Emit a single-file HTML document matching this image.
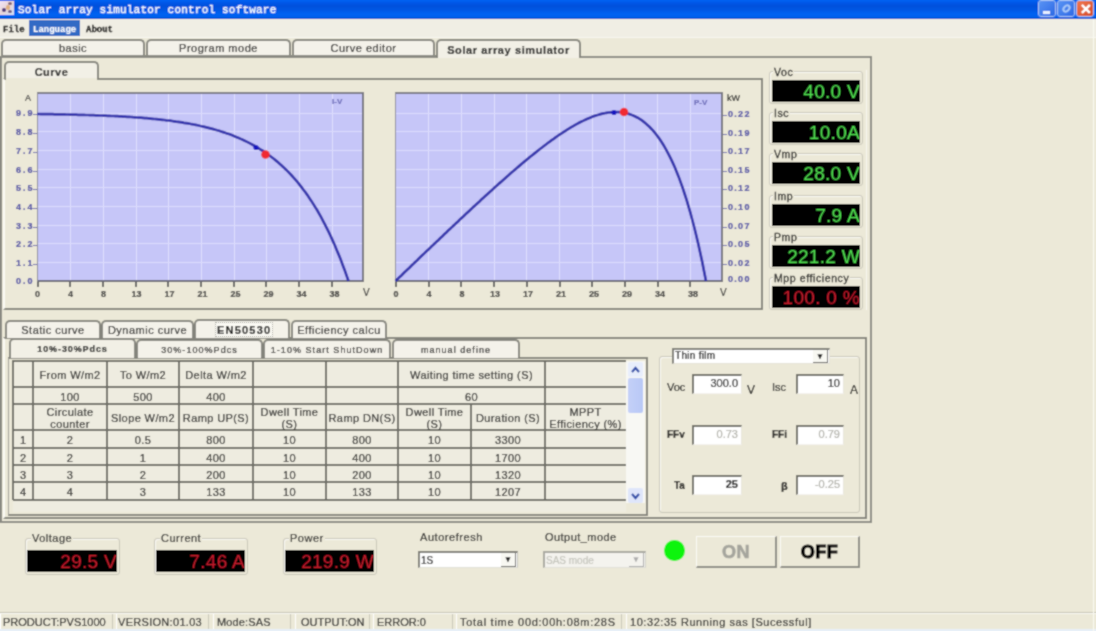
<!DOCTYPE html><html><head><meta charset="utf-8"><style>
*{box-sizing:border-box}
html,body{margin:0;padding:0}
html{background:#ece9d8}
body{width:1096px;height:631px;overflow:hidden;position:relative;background:#ece9d8;filter:url(#bl);-webkit-text-stroke:0.2px;font-family:"Liberation Sans",sans-serif;color:#222}
.a{position:absolute}
.t{position:absolute;white-space:nowrap;line-height:1}
.tab{-webkit-text-stroke:0.2px;position:absolute;border:2px solid #84847c;border-bottom:none;border-radius:5px 5px 0 0;background:#f1efe6;text-align:center;font-size:11px;color:#1c1c1c;white-space:nowrap}
.lcd{position:absolute;background:#000;text-align:right;-webkit-text-stroke:0;font-family:"Liberation Sans",sans-serif;white-space:nowrap;overflow:hidden}
.grp{position:absolute;border:1px solid #c8c6b8;border-radius:3px;box-shadow:inset 1px 1px 0 #fbfaf6}
.gl{position:absolute;background:#ece9d8;font-size:11px;color:#222;padding:0 1px;line-height:1}
.inp{position:absolute;background:#fff;border-top:2px solid #6c6c64;border-left:2px solid #6c6c64;border-right:1px solid #e8e6dc;border-bottom:1px solid #f4f3ee;font-size:11px;text-align:right;padding-right:3px;line-height:15px;color:#111}
</style></head><body>
<svg width="0" height="0" style="position:absolute"><filter id="bl" x="0" y="0" width="1" height="1"><feConvolveMatrix order="3" kernelMatrix="1 2 1 2 8 2 1 2 1" divisor="20" edgeMode="duplicate"/></filter></svg>

<div class="a" style="left:0;top:0;width:1096px;height:19px;background:linear-gradient(#0064f4 0px,#0056e6 3px,#0050dc 6px,#0056e4 10px,#0062f2 14px,#0060ee 17px,#0a4cc0 19px)"></div>
<div class="a" style="left:0px;top:1px;width:14px;height:14px;background:linear-gradient(135deg,#f0e4f4,#e8d4d8 50%,#cfe0f8)"></div>
<div class="a" style="left:6px;top:5px;width:4px;height:5px;background:#e0b080;border-radius:2px"></div>
<div class="a" style="left:2px;top:8px;width:4px;height:4px;background:#503878;border-radius:50%"></div>
<div class="a" style="left:8px;top:2px;width:4px;height:3px;background:#806070;border-radius:50%"></div>
<div class="a" style="left:8px;top:10px;width:4px;height:3px;background:#705880;border-radius:50%"></div>
<div class="t" style="left:18px;top:5px;font-family:'Liberation Mono',monospace;font-weight:normal;font-size:11px;color:#ffffff;letter-spacing:0.2px;-webkit-text-stroke:0.35px #fff">Solar array simulator control software</div>
<div class="a" style="left:1038px;top:0px;width:18px;height:17px;border:1px solid #a8c4f4;border-radius:3px;background:linear-gradient(135deg,#5a94f4,#2c68e4)"><div class="a" style="left:4px;top:10px;width:7px;height:3px;background:#e8f0ff"></div></div>
<div class="a" style="left:1057px;top:0px;width:18px;height:17px;border:1px solid #a8c4f4;border-radius:3px;background:linear-gradient(135deg,#5a94f4,#2c68e4)"><div class="a" style="left:4px;top:4px;width:9px;height:7px;border:2px solid #a8c8f8;border-radius:50%;transform:rotate(-45deg)"></div></div>
<div class="a" style="left:1076px;top:0px;width:18px;height:17px;border:1px solid #a8c4f4;border-radius:3px;background:linear-gradient(135deg,#f07850,#d44a24)"><div class="t" style="left:3px;top:1px;font-size:14px;font-weight:bold;color:#fff">&#x2715;</div></div>
<div class="a" style="left:0;top:19px;width:1096px;height:19px;background:#f0eee4;border-bottom:1px solid #f8f7f0"></div>
<div class="a" style="left:29px;top:20px;width:51px;height:16px;background:#316ac5"></div>
<div class="t" style="left:3px;top:26px;font-family:'Liberation Mono',monospace;font-weight:bold;font-size:9px;color:#000;-webkit-text-stroke:0.3px">File</div>
<div class="t" style="left:33px;top:26px;font-family:'Liberation Mono',monospace;font-weight:bold;font-size:9px;color:#fff;-webkit-text-stroke:0.2px">Language</div>
<div class="t" style="left:86px;top:26px;font-family:'Liberation Mono',monospace;font-weight:bold;font-size:9px;color:#000;-webkit-text-stroke:0.3px">About</div>
<div class="a" style="left:0px;top:56px;width:872px;height:467px;border:2px solid #8a8a82;border-top-width:2px"></div>
<div class="tab" style="left:1px;top:39px;width:144px;height:18px;background:#f4f2ea;"><div class="t" style="left:0;right:0;top:2px;font-size:11px;letter-spacing:0.5px;">basic</div></div>
<div class="tab" style="left:146px;top:39px;width:145px;height:18px;background:#f4f2ea;"><div class="t" style="left:0;right:0;top:2px;font-size:11px;letter-spacing:0.5px;">Program mode</div></div>
<div class="tab" style="left:292px;top:39px;width:143px;height:18px;background:#f4f2ea;"><div class="t" style="left:0;right:0;top:2px;font-size:11px;letter-spacing:0.5px;">Curve editor</div></div>
<div class="a" style="left:1px;top:55px;width:435px;height:2px;background:#8a8a82"></div>
<div class="tab" style="left:436px;top:39px;width:145px;height:19px;background:#f2f0e6;"><div class="t" style="left:0;right:0;top:4px;font-size:11px;letter-spacing:0.6px;font-weight:bold;">Solar array simulator</div></div>
<div class="a" style="left:3px;top:78px;width:760px;height:232px;border:2px solid #84847c;border-left:2px solid #fbfaf4"></div>
<div class="tab" style="left:4px;top:61px;width:95px;height:18px;background:#f2f0e6;"><div class="t" style="left:0;right:0;top:4px;font-size:11px;letter-spacing:0.5px;font-weight:bold;">Curve</div></div>
<div class="a" style="left:6px;top:78px;width:91px;height:2px;background:#ece9d8"></div>
<div class="a" style="left:37px;top:92px;width:327px;height:190px;background:#c6c6f8;border-top:2px solid #7a7a84;border-right:2px solid #74747e;border-bottom:2px solid #6a6a78;border-left:1px solid #8a8a98"></div>
<div class="a" style="left:70px;top:94px;width:1px;height:186px;background:#e0e0fe"></div>
<div class="a" style="left:103px;top:94px;width:1px;height:186px;background:#e0e0fe"></div>
<div class="a" style="left:136px;top:94px;width:1px;height:186px;background:#e0e0fe"></div>
<div class="a" style="left:168px;top:94px;width:1px;height:186px;background:#e0e0fe"></div>
<div class="a" style="left:201px;top:94px;width:1px;height:186px;background:#e0e0fe"></div>
<div class="a" style="left:234px;top:94px;width:1px;height:186px;background:#e0e0fe"></div>
<div class="a" style="left:266px;top:94px;width:1px;height:186px;background:#e0e0fe"></div>
<div class="a" style="left:299px;top:94px;width:1px;height:186px;background:#e0e0fe"></div>
<div class="a" style="left:332px;top:94px;width:1px;height:186px;background:#e0e0fe"></div>
<div class="a" style="left:38px;top:113px;width:324px;height:1px;background:#dcdcfd"></div>
<div class="a" style="left:38px;top:131px;width:324px;height:1px;background:#dcdcfd"></div>
<div class="a" style="left:38px;top:150px;width:324px;height:1px;background:#dcdcfd"></div>
<div class="a" style="left:38px;top:169px;width:324px;height:1px;background:#dcdcfd"></div>
<div class="a" style="left:38px;top:187px;width:324px;height:1px;background:#dcdcfd"></div>
<div class="a" style="left:38px;top:206px;width:324px;height:1px;background:#dcdcfd"></div>
<div class="a" style="left:38px;top:225px;width:324px;height:1px;background:#dcdcfd"></div>
<div class="a" style="left:38px;top:243px;width:324px;height:1px;background:#dcdcfd"></div>
<div class="a" style="left:38px;top:262px;width:324px;height:1px;background:#dcdcfd"></div>
<div class="a" style="left:395px;top:92px;width:328px;height:190px;background:#c6c6f8;border-top:2px solid #7a7a84;border-right:2px solid #74747e;border-bottom:2px solid #6a6a78;border-left:1px solid #8a8a98"></div>
<div class="a" style="left:428px;top:94px;width:1px;height:186px;background:#e0e0fe"></div>
<div class="a" style="left:461px;top:94px;width:1px;height:186px;background:#e0e0fe"></div>
<div class="a" style="left:494px;top:94px;width:1px;height:186px;background:#e0e0fe"></div>
<div class="a" style="left:526px;top:94px;width:1px;height:186px;background:#e0e0fe"></div>
<div class="a" style="left:559px;top:94px;width:1px;height:186px;background:#e0e0fe"></div>
<div class="a" style="left:592px;top:94px;width:1px;height:186px;background:#e0e0fe"></div>
<div class="a" style="left:624px;top:94px;width:1px;height:186px;background:#e0e0fe"></div>
<div class="a" style="left:657px;top:94px;width:1px;height:186px;background:#e0e0fe"></div>
<div class="a" style="left:690px;top:94px;width:1px;height:186px;background:#e0e0fe"></div>
<div class="a" style="left:396px;top:113px;width:325px;height:1px;background:#dcdcfd"></div>
<div class="a" style="left:396px;top:131px;width:325px;height:1px;background:#dcdcfd"></div>
<div class="a" style="left:396px;top:150px;width:325px;height:1px;background:#dcdcfd"></div>
<div class="a" style="left:396px;top:169px;width:325px;height:1px;background:#dcdcfd"></div>
<div class="a" style="left:396px;top:187px;width:325px;height:1px;background:#dcdcfd"></div>
<div class="a" style="left:396px;top:206px;width:325px;height:1px;background:#dcdcfd"></div>
<div class="a" style="left:396px;top:225px;width:325px;height:1px;background:#dcdcfd"></div>
<div class="a" style="left:396px;top:243px;width:325px;height:1px;background:#dcdcfd"></div>
<div class="a" style="left:396px;top:262px;width:325px;height:1px;background:#dcdcfd"></div>
<div class="a" style="left:36.5px;top:282px;width:2px;height:5px;background:#606060"></div>
<div class="t" style="left:27.5px;width:20px;text-align:center;top:290px;font-size:9px;color:#3a3a3a;font-weight:bold">0</div>
<div class="a" style="left:395.0px;top:282px;width:2px;height:5px;background:#606060"></div>
<div class="t" style="left:386.0px;width:20px;text-align:center;top:290px;font-size:9px;color:#3a3a3a;font-weight:bold">0</div>
<div class="a" style="left:69.2px;top:282px;width:2px;height:5px;background:#606060"></div>
<div class="t" style="left:60.5px;width:20px;text-align:center;top:290px;font-size:9px;color:#3a3a3a;font-weight:bold">4</div>
<div class="a" style="left:427.7px;top:282px;width:2px;height:5px;background:#606060"></div>
<div class="t" style="left:419.0px;width:20px;text-align:center;top:290px;font-size:9px;color:#3a3a3a;font-weight:bold">4</div>
<div class="a" style="left:101.9px;top:282px;width:2px;height:5px;background:#606060"></div>
<div class="t" style="left:93.5px;width:20px;text-align:center;top:290px;font-size:9px;color:#3a3a3a;font-weight:bold">8</div>
<div class="a" style="left:460.4px;top:282px;width:2px;height:5px;background:#606060"></div>
<div class="t" style="left:452.0px;width:20px;text-align:center;top:290px;font-size:9px;color:#3a3a3a;font-weight:bold">8</div>
<div class="a" style="left:134.6px;top:282px;width:2px;height:5px;background:#606060"></div>
<div class="t" style="left:126.5px;width:20px;text-align:center;top:290px;font-size:9px;color:#3a3a3a;font-weight:bold">13</div>
<div class="a" style="left:493.1px;top:282px;width:2px;height:5px;background:#606060"></div>
<div class="t" style="left:485.0px;width:20px;text-align:center;top:290px;font-size:9px;color:#3a3a3a;font-weight:bold">13</div>
<div class="a" style="left:167.3px;top:282px;width:2px;height:5px;background:#606060"></div>
<div class="t" style="left:159.5px;width:20px;text-align:center;top:290px;font-size:9px;color:#3a3a3a;font-weight:bold">17</div>
<div class="a" style="left:525.8px;top:282px;width:2px;height:5px;background:#606060"></div>
<div class="t" style="left:518.0px;width:20px;text-align:center;top:290px;font-size:9px;color:#3a3a3a;font-weight:bold">17</div>
<div class="a" style="left:200.0px;top:282px;width:2px;height:5px;background:#606060"></div>
<div class="t" style="left:192.5px;width:20px;text-align:center;top:290px;font-size:9px;color:#3a3a3a;font-weight:bold">21</div>
<div class="a" style="left:558.5px;top:282px;width:2px;height:5px;background:#606060"></div>
<div class="t" style="left:551.0px;width:20px;text-align:center;top:290px;font-size:9px;color:#3a3a3a;font-weight:bold">21</div>
<div class="a" style="left:232.7px;top:282px;width:2px;height:5px;background:#606060"></div>
<div class="t" style="left:225.5px;width:20px;text-align:center;top:290px;font-size:9px;color:#3a3a3a;font-weight:bold">25</div>
<div class="a" style="left:591.2px;top:282px;width:2px;height:5px;background:#606060"></div>
<div class="t" style="left:584.0px;width:20px;text-align:center;top:290px;font-size:9px;color:#3a3a3a;font-weight:bold">25</div>
<div class="a" style="left:265.4px;top:282px;width:2px;height:5px;background:#606060"></div>
<div class="t" style="left:258.5px;width:20px;text-align:center;top:290px;font-size:9px;color:#3a3a3a;font-weight:bold">29</div>
<div class="a" style="left:623.9px;top:282px;width:2px;height:5px;background:#606060"></div>
<div class="t" style="left:617.0px;width:20px;text-align:center;top:290px;font-size:9px;color:#3a3a3a;font-weight:bold">29</div>
<div class="a" style="left:298.1px;top:282px;width:2px;height:5px;background:#606060"></div>
<div class="t" style="left:291.5px;width:20px;text-align:center;top:290px;font-size:9px;color:#3a3a3a;font-weight:bold">34</div>
<div class="a" style="left:656.6px;top:282px;width:2px;height:5px;background:#606060"></div>
<div class="t" style="left:650.0px;width:20px;text-align:center;top:290px;font-size:9px;color:#3a3a3a;font-weight:bold">34</div>
<div class="a" style="left:330.8px;top:282px;width:2px;height:5px;background:#606060"></div>
<div class="t" style="left:324.5px;width:20px;text-align:center;top:290px;font-size:9px;color:#3a3a3a;font-weight:bold">38</div>
<div class="a" style="left:689.3px;top:282px;width:2px;height:5px;background:#606060"></div>
<div class="t" style="left:683.0px;width:20px;text-align:center;top:290px;font-size:9px;color:#3a3a3a;font-weight:bold">38</div>
<div class="t" style="left:363px;top:288px;font-size:10px;color:#333">V</div>
<div class="t" style="left:720px;top:288px;font-size:10px;color:#333">V</div>
<div class="t" style="left:25px;top:94px;font-size:9px;color:#333">A</div>
<div class="t" style="left:727px;top:94px;font-size:9px;color:#222">kW</div>
<div class="t" style="left:16px;top:109.4px;font-size:9px;color:#4a4aa4;font-weight:bold;letter-spacing:2px">9.9</div>
<div class="a" style="left:33px;top:114.4px;width:4px;height:1px;background:#6060b0"></div>
<div class="t" style="left:16px;top:128.1px;font-size:9px;color:#4a4aa4;font-weight:bold;letter-spacing:2px">8.8</div>
<div class="a" style="left:33px;top:133.1px;width:4px;height:1px;background:#6060b0"></div>
<div class="t" style="left:16px;top:146.8px;font-size:9px;color:#4a4aa4;font-weight:bold;letter-spacing:2px">7.7</div>
<div class="a" style="left:33px;top:151.8px;width:4px;height:1px;background:#6060b0"></div>
<div class="t" style="left:16px;top:165.5px;font-size:9px;color:#4a4aa4;font-weight:bold;letter-spacing:2px">6.6</div>
<div class="a" style="left:33px;top:170.5px;width:4px;height:1px;background:#6060b0"></div>
<div class="t" style="left:16px;top:184.2px;font-size:9px;color:#4a4aa4;font-weight:bold;letter-spacing:2px">5.5</div>
<div class="a" style="left:33px;top:189.2px;width:4px;height:1px;background:#6060b0"></div>
<div class="t" style="left:16px;top:202.9px;font-size:9px;color:#4a4aa4;font-weight:bold;letter-spacing:2px">4.4</div>
<div class="a" style="left:33px;top:207.9px;width:4px;height:1px;background:#6060b0"></div>
<div class="t" style="left:16px;top:221.6px;font-size:9px;color:#4a4aa4;font-weight:bold;letter-spacing:2px">3.3</div>
<div class="a" style="left:33px;top:226.6px;width:4px;height:1px;background:#6060b0"></div>
<div class="t" style="left:16px;top:240.3px;font-size:9px;color:#4a4aa4;font-weight:bold;letter-spacing:2px">2.2</div>
<div class="a" style="left:33px;top:245.3px;width:4px;height:1px;background:#6060b0"></div>
<div class="t" style="left:16px;top:259.0px;font-size:9px;color:#4a4aa4;font-weight:bold;letter-spacing:2px">1.1</div>
<div class="a" style="left:33px;top:264.0px;width:4px;height:1px;background:#6060b0"></div>
<div class="t" style="left:16px;top:277px;font-size:9px;color:#4a4aa4;font-weight:bold;letter-spacing:2px">0.0</div>
<div class="t" style="left:728px;top:110.0px;font-size:9px;color:#4a4aa4;font-weight:bold;letter-spacing:1.3px">0.22</div>
<div class="a" style="left:723px;top:115.0px;width:4px;height:1px;background:#6060b0"></div>
<div class="t" style="left:728px;top:128.6px;font-size:9px;color:#4a4aa4;font-weight:bold;letter-spacing:1.3px">0.19</div>
<div class="a" style="left:723px;top:133.6px;width:4px;height:1px;background:#6060b0"></div>
<div class="t" style="left:728px;top:147.2px;font-size:9px;color:#4a4aa4;font-weight:bold;letter-spacing:1.3px">0.17</div>
<div class="a" style="left:723px;top:152.2px;width:4px;height:1px;background:#6060b0"></div>
<div class="t" style="left:728px;top:165.8px;font-size:9px;color:#4a4aa4;font-weight:bold;letter-spacing:1.3px">0.15</div>
<div class="a" style="left:723px;top:170.8px;width:4px;height:1px;background:#6060b0"></div>
<div class="t" style="left:728px;top:184.4px;font-size:9px;color:#4a4aa4;font-weight:bold;letter-spacing:1.3px">0.12</div>
<div class="a" style="left:723px;top:189.4px;width:4px;height:1px;background:#6060b0"></div>
<div class="t" style="left:728px;top:203.0px;font-size:9px;color:#4a4aa4;font-weight:bold;letter-spacing:1.3px">0.10</div>
<div class="a" style="left:723px;top:208.0px;width:4px;height:1px;background:#6060b0"></div>
<div class="t" style="left:728px;top:221.6px;font-size:9px;color:#4a4aa4;font-weight:bold;letter-spacing:1.3px">0.07</div>
<div class="a" style="left:723px;top:226.6px;width:4px;height:1px;background:#6060b0"></div>
<div class="t" style="left:728px;top:240.2px;font-size:9px;color:#4a4aa4;font-weight:bold;letter-spacing:1.3px">0.05</div>
<div class="a" style="left:723px;top:245.2px;width:4px;height:1px;background:#6060b0"></div>
<div class="t" style="left:728px;top:258.8px;font-size:9px;color:#4a4aa4;font-weight:bold;letter-spacing:1.3px">0.02</div>
<div class="a" style="left:723px;top:263.8px;width:4px;height:1px;background:#6060b0"></div>
<div class="t" style="left:728px;top:275px;font-size:9px;color:#4a4aa4;font-weight:bold;letter-spacing:1.3px">0.00</div>
<div class="t" style="left:332px;top:98px;font-size:8px;color:#6a6ab8;font-weight:bold">I-V</div>
<div class="t" style="left:694px;top:99px;font-size:8px;color:#6a6ab8;font-weight:bold">P-V</div>
<svg class="a" style="left:0;top:0" width="1096" height="631">
<polyline points="37.0,114.0 39.0,114.0 40.9,114.1 42.9,114.1 44.8,114.1 46.8,114.1 48.8,114.2 50.7,114.2 52.7,114.2 54.6,114.3 56.6,114.3 58.6,114.3 60.5,114.4 62.5,114.4 64.4,114.4 66.4,114.5 68.3,114.5 70.3,114.6 72.3,114.6 74.2,114.7 76.2,114.7 78.1,114.8 80.1,114.8 82.1,114.9 84.0,114.9 86.0,115.0 87.9,115.0 89.9,115.1 91.9,115.2 93.8,115.2 95.8,115.3 97.7,115.4 99.7,115.5 101.7,115.5 103.6,115.6 105.6,115.7 107.5,115.8 109.5,115.9 111.4,116.0 113.4,116.0 115.4,116.1 117.3,116.2 119.3,116.3 121.2,116.4 123.2,116.6 125.2,116.7 127.1,116.8 129.1,116.9 131.0,117.0 133.0,117.2 135.0,117.3 136.9,117.5 138.9,117.6 140.8,117.7 142.8,117.9 144.8,118.1 146.7,118.2 148.7,118.4 150.6,118.6 152.6,118.8 154.5,119.0 156.5,119.2 158.5,119.4 160.4,119.6 162.4,119.8 164.3,120.0 166.3,120.3 168.3,120.5 170.2,120.7 172.2,121.0 174.1,121.3 176.1,121.6 178.1,121.8 180.0,122.1 182.0,122.4 183.9,122.8 185.9,123.1 187.9,123.4 189.8,123.8 191.8,124.2 193.7,124.5 195.7,124.9 197.6,125.3 199.6,125.8 201.6,126.2 203.5,126.6 205.5,127.1 207.4,127.6 209.4,128.1 211.4,128.6 213.3,129.1 215.3,129.7 217.2,130.3 219.2,130.8 221.2,131.5 223.1,132.1 225.1,132.7 227.0,133.4 229.0,134.1 231.0,134.8 232.9,135.6 234.9,136.4 236.8,137.2 238.8,138.0 240.7,138.9 242.7,139.8 244.7,140.7 246.6,141.6 248.6,142.6 250.5,143.6 252.5,144.7 254.5,145.8 256.4,146.9 258.4,148.1 260.3,149.3 262.3,150.5 264.3,151.8 266.2,153.2 268.2,154.6 270.1,156.0 272.1,157.5 274.1,159.0 276.0,160.6 278.0,162.3 279.9,164.0 281.9,165.7 283.8,167.6 285.8,169.4 287.8,171.4 289.7,173.4 291.7,175.5 293.6,177.7 295.6,179.9 297.6,182.2 299.5,184.6 301.5,187.1 303.4,189.7 305.4,192.3 307.4,195.1 309.3,197.9 311.3,200.9 313.2,203.9 315.2,207.1 317.2,210.3 319.1,213.7 321.1,217.2 323.0,220.8 325.0,224.6 326.9,228.4 328.9,232.4 330.9,236.6 332.8,240.9 334.8,245.3 336.7,249.9 338.7,254.6 340.7,259.6 342.6,264.7 344.6,269.9 346.5,275.4 348.5,281.0" fill="none" stroke="#3030ac" stroke-width="2.7"/>
<polyline points="395.5,281.0 397.5,279.1 399.4,277.2 401.4,275.4 403.3,273.5 405.3,271.6 407.2,269.7 409.2,267.9 411.1,266.0 413.1,264.1 415.0,262.2 417.0,260.4 418.9,258.5 420.9,256.6 422.8,254.8 424.8,252.9 426.7,251.0 428.7,249.2 430.7,247.3 432.6,245.4 434.6,243.6 436.5,241.7 438.5,239.9 440.4,238.0 442.4,236.2 444.3,234.3 446.3,232.5 448.2,230.6 450.2,228.8 452.1,226.9 454.1,225.1 456.0,223.2 458.0,221.4 459.9,219.6 461.9,217.7 463.8,215.9 465.8,214.1 467.8,212.2 469.7,210.4 471.7,208.6 473.6,206.8 475.6,205.0 477.5,203.2 479.5,201.4 481.4,199.6 483.4,197.8 485.3,196.0 487.3,194.2 489.2,192.4 491.2,190.7 493.1,188.9 495.1,187.1 497.0,185.4 499.0,183.6 501.0,181.9 502.9,180.2 504.9,178.4 506.8,176.7 508.8,175.0 510.7,173.3 512.7,171.6 514.6,169.9 516.6,168.2 518.5,166.6 520.5,164.9 522.4,163.3 524.4,161.6 526.3,160.0 528.3,158.4 530.2,156.8 532.2,155.2 534.2,153.6 536.1,152.1 538.1,150.5 540.0,149.0 542.0,147.5 543.9,146.0 545.9,144.5 547.8,143.0 549.8,141.6 551.7,140.2 553.7,138.8 555.6,137.4 557.6,136.0 559.5,134.7 561.5,133.4 563.4,132.1 565.4,130.8 567.3,129.6 569.3,128.4 571.3,127.2 573.2,126.1 575.2,124.9 577.1,123.9 579.1,122.8 581.0,121.8 583.0,120.9 584.9,119.9 586.9,119.0 588.8,118.2 590.8,117.4 592.7,116.6 594.7,115.9 596.6,115.3 598.6,114.7 600.5,114.1 602.5,113.6 604.5,113.2 606.4,112.8 608.4,112.5 610.3,112.3 612.3,112.1 614.2,112.0 616.2,112.0 618.1,112.1 620.1,112.2 622.0,112.4 624.0,112.7 625.9,113.1 627.9,113.6 629.8,114.2 631.8,114.9 633.7,115.8 635.7,116.7 637.7,117.7 639.6,118.9 641.6,120.2 643.5,121.6 645.5,123.2 647.4,124.9 649.4,126.7 651.3,128.7 653.3,130.9 655.2,133.2 657.2,135.7 659.1,138.4 661.1,141.3 663.0,144.3 665.0,147.6 666.9,151.1 668.9,154.8 670.8,158.7 672.8,162.9 674.8,167.3 676.7,172.0 678.7,176.9 680.6,182.1 682.6,187.7 684.5,193.5 686.5,199.6 688.4,206.0 690.4,212.8 692.3,220.0 694.3,227.5 696.2,235.3 698.2,243.6 700.1,252.3 702.1,261.4 704.0,271.0 706.0,281.0" fill="none" stroke="#3030ac" stroke-width="2.7"/>
<circle cx="265.5" cy="154.5" r="4.3" fill="#f02a30"/>
<circle cx="624" cy="112" r="4.3" fill="#f02a30"/>
<circle cx="256" cy="147.5" r="2.6" fill="#1414c0"/>
<circle cx="614" cy="112.5" r="2.6" fill="#1414c0"/>
</svg>
<div class="grp" style="left:769px;top:71px;width:94px;height:33px"></div>
<div class="gl" style="left:773px;top:67px;font-size:10.5px;letter-spacing:0.6px;color:#1a1a1a;-webkit-text-stroke:0.3px">Voc</div>
<div class="lcd" style="left:772px;top:80px;width:88px;height:22px;color:#50e050;font-size:19px;font-weight:normal;line-height:23px;letter-spacing:0.3px">40.0 V</div>
<div class="grp" style="left:769px;top:112px;width:94px;height:33px"></div>
<div class="gl" style="left:773px;top:108px;font-size:10.5px;letter-spacing:0.6px;color:#1a1a1a;-webkit-text-stroke:0.3px">Isc</div>
<div class="lcd" style="left:772px;top:121px;width:88px;height:22px;color:#50e050;font-size:19px;font-weight:normal;line-height:23px;letter-spacing:0.3px">10.0A</div>
<div class="grp" style="left:769px;top:153px;width:94px;height:33px"></div>
<div class="gl" style="left:773px;top:149px;font-size:10.5px;letter-spacing:0.6px;color:#1a1a1a;-webkit-text-stroke:0.3px">Vmp</div>
<div class="lcd" style="left:772px;top:162px;width:88px;height:22px;color:#50e050;font-size:19px;font-weight:normal;line-height:23px;letter-spacing:0.3px">28.0 V</div>
<div class="grp" style="left:769px;top:195px;width:94px;height:33px"></div>
<div class="gl" style="left:773px;top:191px;font-size:10.5px;letter-spacing:0.6px;color:#1a1a1a;-webkit-text-stroke:0.3px">Imp</div>
<div class="lcd" style="left:772px;top:204px;width:88px;height:22px;color:#50e050;font-size:19px;font-weight:normal;line-height:23px;letter-spacing:0.3px">7.9 A</div>
<div class="grp" style="left:769px;top:236px;width:94px;height:33px"></div>
<div class="gl" style="left:773px;top:232px;font-size:10.5px;letter-spacing:0.6px;color:#1a1a1a;-webkit-text-stroke:0.3px">Pmp</div>
<div class="lcd" style="left:772px;top:245px;width:88px;height:22px;color:#50e050;font-size:19px;font-weight:normal;line-height:23px;letter-spacing:0.3px">221.2 W</div>
<div class="grp" style="left:769px;top:277px;width:94px;height:33px"></div>
<div class="gl" style="left:773px;top:273px;font-size:10.5px;letter-spacing:0.6px;color:#1a1a1a;-webkit-text-stroke:0.3px">Mpp efficiency</div>
<div class="lcd" style="left:772px;top:286px;width:88px;height:22px;color:#c41a2a;font-size:19px;font-weight:normal;line-height:23px;letter-spacing:0.3px">100. 0 %</div>
<div class="a" style="left:866px;top:70px;width:1px;height:240px;background:#f8f7f0"></div>
<div class="a" style="left:3px;top:337px;width:864px;height:182px;border:2px solid #84847c;border-left:2px solid #fbfaf4"></div>
<div class="tab" style="left:5px;top:320px;width:96px;height:18px;background:#f4f2ea;"><div class="t" style="left:0;right:0;top:3px;font-size:11px;letter-spacing:0.5px;">Static curve</div></div>
<div class="tab" style="left:101px;top:320px;width:93px;height:18px;background:#f4f2ea;"><div class="t" style="left:0;right:0;top:3px;font-size:11px;letter-spacing:0.5px;">Dynamic curve</div></div>
<div class="tab" style="left:291px;top:320px;width:96px;height:18px;background:#f4f2ea;"><div class="t" style="left:0;right:0;top:3px;font-size:11px;letter-spacing:0.5px;">Efficiency calcu</div></div>
<div class="tab" style="left:194px;top:319px;width:96px;height:19px;background:#f4f2ea;"><div class="t" style="left:0;right:0;top:4px;font-size:11px;letter-spacing:0.5px;"></div></div>
<div class="a" style="left:215px;top:322px;width:58px;height:15px;background:#fbfaf4;border:1px dotted #9a9a90"></div>
<div class="t" style="left:217px;top:325px;font-size:11px;font-weight:bold;color:#111;letter-spacing:1.2px">EN50530</div>
<div class="a" style="left:8px;top:357px;width:640px;height:159px;border:2px solid #84847c;border-left:1px solid #9c9c94"></div>
<div class="tab" style="left:136px;top:339px;width:127px;height:19px;background:#f4f2ea;"><div class="t" style="left:0;right:0;top:5px;font-size:9px;letter-spacing:1.05px;">30%-100%Pdcs</div></div>
<div class="tab" style="left:263px;top:339px;width:128px;height:19px;background:#f4f2ea;"><div class="t" style="left:0;right:0;top:5px;font-size:9px;letter-spacing:1.05px;">1-10% Start ShutDown</div></div>
<div class="tab" style="left:392px;top:339px;width:128px;height:19px;background:#f4f2ea;"><div class="t" style="left:0;right:0;top:5px;font-size:9px;letter-spacing:1.05px;">manual define</div></div>
<div class="tab" style="left:9px;top:338px;width:127px;height:20px;background:#f2f0e6;"><div class="t" style="left:0;right:0;top:5px;font-size:9px;letter-spacing:0.9px;font-weight:bold;">10%-30%Pdcs</div></div>
<div class="a" style="left:13px;top:361px;width:613px;height:151px;background:#eeece0"></div>
<div class="a" style="left:13px;top:386px;width:613px;height:2px;background:#6c6c64"></div>
<div class="a" style="left:13px;top:403px;width:613px;height:2px;background:#6c6c64"></div>
<div class="a" style="left:13px;top:429px;width:613px;height:2px;background:#6c6c64"></div>
<div class="a" style="left:13px;top:447px;width:613px;height:2px;background:#6c6c64"></div>
<div class="a" style="left:13px;top:464px;width:613px;height:2px;background:#6c6c64"></div>
<div class="a" style="left:13px;top:481px;width:613px;height:2px;background:#6c6c64"></div>
<div class="a" style="left:13px;top:499px;width:613px;height:2px;background:#6c6c64"></div>
<div class="a" style="left:12px;top:360px;width:614px;height:2px;background:#6c6c64"></div>
<div class="a" style="left:12px;top:361px;width:2px;height:139px;background:#6c6c64"></div>
<div class="a" style="left:32px;top:361px;width:2px;height:139px;background:#6c6c64"></div>
<div class="a" style="left:106px;top:361px;width:2px;height:139px;background:#6c6c64"></div>
<div class="a" style="left:178px;top:361px;width:2px;height:139px;background:#6c6c64"></div>
<div class="a" style="left:252px;top:361px;width:2px;height:139px;background:#6c6c64"></div>
<div class="a" style="left:325px;top:361px;width:2px;height:139px;background:#6c6c64"></div>
<div class="a" style="left:397px;top:361px;width:2px;height:139px;background:#6c6c64"></div>
<div class="a" style="left:470px;top:404px;width:2px;height:96px;background:#6c6c64"></div>
<div class="a" style="left:544px;top:361px;width:2px;height:139px;background:#6c6c64"></div>
<div class="a" style="left:33px;top:362px;width:74px;height:26px;display:flex;align-items:center;justify-content:center;text-align:center;font-size:11px;line-height:12px;letter-spacing:0.4px;color:#1c1c1c">From W/m2</div>
<div class="a" style="left:107px;top:362px;width:72px;height:26px;display:flex;align-items:center;justify-content:center;text-align:center;font-size:11px;line-height:12px;letter-spacing:0.4px;color:#1c1c1c">To W/m2</div>
<div class="a" style="left:179px;top:362px;width:74px;height:26px;display:flex;align-items:center;justify-content:center;text-align:center;font-size:11px;line-height:12px;letter-spacing:0.4px;color:#1c1c1c">Delta W/m2</div>
<div class="a" style="left:398px;top:362px;width:147px;height:26px;display:flex;align-items:center;justify-content:center;text-align:center;font-size:11px;line-height:12px;letter-spacing:0.4px;color:#1c1c1c">Waiting time setting (S)</div>
<div class="a" style="left:33px;top:388px;width:74px;height:17px;display:flex;align-items:center;justify-content:center;text-align:center;font-size:11px;line-height:12px;letter-spacing:0.4px;color:#1c1c1c">100</div>
<div class="a" style="left:107px;top:388px;width:72px;height:17px;display:flex;align-items:center;justify-content:center;text-align:center;font-size:11px;line-height:12px;letter-spacing:0.4px;color:#1c1c1c">500</div>
<div class="a" style="left:179px;top:388px;width:74px;height:17px;display:flex;align-items:center;justify-content:center;text-align:center;font-size:11px;line-height:12px;letter-spacing:0.4px;color:#1c1c1c">400</div>
<div class="a" style="left:398px;top:388px;width:147px;height:17px;display:flex;align-items:center;justify-content:center;text-align:center;font-size:11px;line-height:12px;letter-spacing:0.4px;color:#1c1c1c">60</div>
<div class="a" style="left:33px;top:405px;width:74px;height:26px;display:flex;align-items:center;justify-content:center;text-align:center;font-size:11px;line-height:12px;letter-spacing:0.4px;color:#1c1c1c">Circulate<br>counter</div>
<div class="a" style="left:107px;top:405px;width:72px;height:26px;display:flex;align-items:center;justify-content:center;text-align:center;font-size:11px;line-height:12px;letter-spacing:0.4px;color:#1c1c1c">Slope W/m2</div>
<div class="a" style="left:179px;top:405px;width:74px;height:26px;display:flex;align-items:center;justify-content:center;text-align:center;font-size:11px;line-height:12px;letter-spacing:0.4px;color:#1c1c1c">Ramp UP(S)</div>
<div class="a" style="left:253px;top:405px;width:73px;height:26px;display:flex;align-items:center;justify-content:center;text-align:center;font-size:11px;line-height:12px;letter-spacing:0.4px;color:#1c1c1c">Dwell Time<br>(S)</div>
<div class="a" style="left:326px;top:405px;width:72px;height:26px;display:flex;align-items:center;justify-content:center;text-align:center;font-size:11px;line-height:12px;letter-spacing:0.4px;color:#1c1c1c">Ramp DN(S)</div>
<div class="a" style="left:398px;top:405px;width:73px;height:26px;display:flex;align-items:center;justify-content:center;text-align:center;font-size:11px;line-height:12px;letter-spacing:0.4px;color:#1c1c1c">Dwell Time<br>(S)</div>
<div class="a" style="left:471px;top:405px;width:74px;height:26px;display:flex;align-items:center;justify-content:center;text-align:center;font-size:11px;line-height:12px;letter-spacing:0.4px;color:#1c1c1c">Duration (S)</div>
<div class="a" style="left:545px;top:405px;width:81px;height:26px;display:flex;align-items:center;justify-content:center;text-align:center;font-size:11px;line-height:12px;letter-spacing:0.4px;color:#1c1c1c">MPPT<br>Efficiency (%)</div>
<div class="t" style="left:20px;top:435px;font-size:11px;color:#1c1c1c">1</div>
<div class="a" style="left:33px;top:431px;width:74px;height:18px;display:flex;align-items:center;justify-content:center;text-align:center;font-size:11px;line-height:12px;letter-spacing:0.4px;color:#1c1c1c">2</div>
<div class="a" style="left:107px;top:431px;width:72px;height:18px;display:flex;align-items:center;justify-content:center;text-align:center;font-size:11px;line-height:12px;letter-spacing:0.4px;color:#1c1c1c">0.5</div>
<div class="a" style="left:179px;top:431px;width:74px;height:18px;display:flex;align-items:center;justify-content:center;text-align:center;font-size:11px;line-height:12px;letter-spacing:0.4px;color:#1c1c1c">800</div>
<div class="a" style="left:253px;top:431px;width:73px;height:18px;display:flex;align-items:center;justify-content:center;text-align:center;font-size:11px;line-height:12px;letter-spacing:0.4px;color:#1c1c1c">10</div>
<div class="a" style="left:326px;top:431px;width:72px;height:18px;display:flex;align-items:center;justify-content:center;text-align:center;font-size:11px;line-height:12px;letter-spacing:0.4px;color:#1c1c1c">800</div>
<div class="a" style="left:398px;top:431px;width:73px;height:18px;display:flex;align-items:center;justify-content:center;text-align:center;font-size:11px;line-height:12px;letter-spacing:0.4px;color:#1c1c1c">10</div>
<div class="a" style="left:471px;top:431px;width:74px;height:18px;display:flex;align-items:center;justify-content:center;text-align:center;font-size:11px;line-height:12px;letter-spacing:0.4px;color:#1c1c1c">3300</div>
<div class="a" style="left:545px;top:431px;width:81px;height:18px;display:flex;align-items:center;justify-content:center;text-align:center;font-size:11px;line-height:12px;letter-spacing:0.4px;color:#1c1c1c"></div>
<div class="t" style="left:20px;top:453px;font-size:11px;color:#1c1c1c">2</div>
<div class="a" style="left:33px;top:449px;width:74px;height:17px;display:flex;align-items:center;justify-content:center;text-align:center;font-size:11px;line-height:12px;letter-spacing:0.4px;color:#1c1c1c">2</div>
<div class="a" style="left:107px;top:449px;width:72px;height:17px;display:flex;align-items:center;justify-content:center;text-align:center;font-size:11px;line-height:12px;letter-spacing:0.4px;color:#1c1c1c">1</div>
<div class="a" style="left:179px;top:449px;width:74px;height:17px;display:flex;align-items:center;justify-content:center;text-align:center;font-size:11px;line-height:12px;letter-spacing:0.4px;color:#1c1c1c">400</div>
<div class="a" style="left:253px;top:449px;width:73px;height:17px;display:flex;align-items:center;justify-content:center;text-align:center;font-size:11px;line-height:12px;letter-spacing:0.4px;color:#1c1c1c">10</div>
<div class="a" style="left:326px;top:449px;width:72px;height:17px;display:flex;align-items:center;justify-content:center;text-align:center;font-size:11px;line-height:12px;letter-spacing:0.4px;color:#1c1c1c">400</div>
<div class="a" style="left:398px;top:449px;width:73px;height:17px;display:flex;align-items:center;justify-content:center;text-align:center;font-size:11px;line-height:12px;letter-spacing:0.4px;color:#1c1c1c">10</div>
<div class="a" style="left:471px;top:449px;width:74px;height:17px;display:flex;align-items:center;justify-content:center;text-align:center;font-size:11px;line-height:12px;letter-spacing:0.4px;color:#1c1c1c">1700</div>
<div class="a" style="left:545px;top:449px;width:81px;height:17px;display:flex;align-items:center;justify-content:center;text-align:center;font-size:11px;line-height:12px;letter-spacing:0.4px;color:#1c1c1c"></div>
<div class="t" style="left:20px;top:470px;font-size:11px;color:#1c1c1c">3</div>
<div class="a" style="left:33px;top:466px;width:74px;height:17px;display:flex;align-items:center;justify-content:center;text-align:center;font-size:11px;line-height:12px;letter-spacing:0.4px;color:#1c1c1c">3</div>
<div class="a" style="left:107px;top:466px;width:72px;height:17px;display:flex;align-items:center;justify-content:center;text-align:center;font-size:11px;line-height:12px;letter-spacing:0.4px;color:#1c1c1c">2</div>
<div class="a" style="left:179px;top:466px;width:74px;height:17px;display:flex;align-items:center;justify-content:center;text-align:center;font-size:11px;line-height:12px;letter-spacing:0.4px;color:#1c1c1c">200</div>
<div class="a" style="left:253px;top:466px;width:73px;height:17px;display:flex;align-items:center;justify-content:center;text-align:center;font-size:11px;line-height:12px;letter-spacing:0.4px;color:#1c1c1c">10</div>
<div class="a" style="left:326px;top:466px;width:72px;height:17px;display:flex;align-items:center;justify-content:center;text-align:center;font-size:11px;line-height:12px;letter-spacing:0.4px;color:#1c1c1c">200</div>
<div class="a" style="left:398px;top:466px;width:73px;height:17px;display:flex;align-items:center;justify-content:center;text-align:center;font-size:11px;line-height:12px;letter-spacing:0.4px;color:#1c1c1c">10</div>
<div class="a" style="left:471px;top:466px;width:74px;height:17px;display:flex;align-items:center;justify-content:center;text-align:center;font-size:11px;line-height:12px;letter-spacing:0.4px;color:#1c1c1c">1320</div>
<div class="a" style="left:545px;top:466px;width:81px;height:17px;display:flex;align-items:center;justify-content:center;text-align:center;font-size:11px;line-height:12px;letter-spacing:0.4px;color:#1c1c1c"></div>
<div class="t" style="left:20px;top:487px;font-size:11px;color:#1c1c1c">4</div>
<div class="a" style="left:33px;top:483px;width:74px;height:18px;display:flex;align-items:center;justify-content:center;text-align:center;font-size:11px;line-height:12px;letter-spacing:0.4px;color:#1c1c1c">4</div>
<div class="a" style="left:107px;top:483px;width:72px;height:18px;display:flex;align-items:center;justify-content:center;text-align:center;font-size:11px;line-height:12px;letter-spacing:0.4px;color:#1c1c1c">3</div>
<div class="a" style="left:179px;top:483px;width:74px;height:18px;display:flex;align-items:center;justify-content:center;text-align:center;font-size:11px;line-height:12px;letter-spacing:0.4px;color:#1c1c1c">133</div>
<div class="a" style="left:253px;top:483px;width:73px;height:18px;display:flex;align-items:center;justify-content:center;text-align:center;font-size:11px;line-height:12px;letter-spacing:0.4px;color:#1c1c1c">10</div>
<div class="a" style="left:326px;top:483px;width:72px;height:18px;display:flex;align-items:center;justify-content:center;text-align:center;font-size:11px;line-height:12px;letter-spacing:0.4px;color:#1c1c1c">133</div>
<div class="a" style="left:398px;top:483px;width:73px;height:18px;display:flex;align-items:center;justify-content:center;text-align:center;font-size:11px;line-height:12px;letter-spacing:0.4px;color:#1c1c1c">10</div>
<div class="a" style="left:471px;top:483px;width:74px;height:18px;display:flex;align-items:center;justify-content:center;text-align:center;font-size:11px;line-height:12px;letter-spacing:0.4px;color:#1c1c1c">1207</div>
<div class="a" style="left:545px;top:483px;width:81px;height:18px;display:flex;align-items:center;justify-content:center;text-align:center;font-size:11px;line-height:12px;letter-spacing:0.4px;color:#1c1c1c"></div>
<div class="a" style="left:626px;top:361px;width:19px;height:142px;background:#f8f8f4"></div>
<div class="a" style="left:628px;top:362px;width:15px;height:15px;background:#e8eefc;border-radius:2px"></div>
<svg class="a" style="left:628px;top:362px" width="15" height="15"><path d="M4,10 L7.5,6 L11,10" fill="none" stroke="#2c4ca8" stroke-width="2.2"/></svg>
<div class="a" style="left:628px;top:378px;width:15px;height:35px;background:linear-gradient(90deg,#c4d0f8,#b8c8f6);border-radius:2px"></div>
<div class="a" style="left:628px;top:488px;width:15px;height:15px;background:#dfe6fa;border-radius:2px"></div>
<svg class="a" style="left:628px;top:488px" width="15" height="15"><path d="M4,6 L7.5,10 L11,6" fill="none" stroke="#2c4ca8" stroke-width="2.2"/></svg>
<div class="grp" style="left:659px;top:356px;width:201px;height:157px"></div>
<div class="a" style="left:672px;top:348px;width:158px;height:16px;background:#fff;border:1px solid #e4e2d8;border-top:2px solid #7c7c74;border-left:2px solid #7c7c74"></div>
<div class="t" style="left:675px;top:351px;font-size:10px;color:#000;letter-spacing:0.3px">Thin film</div>
<div class="a" style="left:813px;top:350px;width:15px;height:13px;background:#f8f8f2;border-right:1px solid #555;border-bottom:1px solid #555;font-size:8px;text-align:center;line-height:13px;color:#000">&#9660;</div>
<div class="t" style="left:667px;top:382px;font-size:11px;color:#111;">Voc</div>
<div class="inp" style="left:692px;top:374px;width:50px;height:20px">300.0</div>
<div class="t" style="left:747px;top:384px;font-size:12px;color:#111;">V</div>
<div class="t" style="left:772px;top:382px;font-size:11px;color:#111;">Isc</div>
<div class="inp" style="left:796px;top:374px;width:48px;height:20px">10</div>
<div class="t" style="left:850px;top:384px;font-size:12px;color:#111;">A</div>
<div class="t" style="left:667px;top:430px;font-size:10px;color:#111;font-weight:bold">FFv</div>
<div class="inp" style="left:692px;top:425px;width:50px;height:20px;color:#b0b0a8">0.73</div>
<div class="t" style="left:772px;top:430px;font-size:10px;color:#111;font-weight:bold">FFi</div>
<div class="inp" style="left:796px;top:425px;width:48px;height:20px;color:#b0b0a8">0.79</div>
<div class="t" style="left:674px;top:481px;font-size:10px;color:#111;font-weight:bold">Ta</div>
<div class="inp" style="left:692px;top:475px;width:50px;height:20px;font-weight:bold">25</div>
<div class="t" style="left:781px;top:481px;font-size:11px;color:#111;font-weight:bold">&beta;</div>
<div class="inp" style="left:796px;top:475px;width:48px;height:20px;color:#b0b0a8">-0.25</div>
<div class="grp" style="left:25px;top:538px;width:95px;height:37px"></div>
<div class="gl" style="left:31px;top:533px;font-size:11px;letter-spacing:0.5px">Voltage</div>
<div class="lcd" style="left:27px;top:550px;width:90px;height:22px;color:#c41a2a;font-size:19px;font-weight:normal;line-height:23px;letter-spacing:0.3px">29.5 V</div>
<div class="grp" style="left:154px;top:538px;width:94px;height:37px"></div>
<div class="gl" style="left:160px;top:533px;font-size:11px;letter-spacing:0.5px">Current</div>
<div class="lcd" style="left:156px;top:550px;width:89px;height:22px;color:#c41a2a;font-size:19px;font-weight:normal;line-height:23px;letter-spacing:0.3px">7.46 A</div>
<div class="grp" style="left:283px;top:538px;width:94px;height:37px"></div>
<div class="gl" style="left:289px;top:533px;font-size:11px;letter-spacing:0.5px">Power</div>
<div class="lcd" style="left:285px;top:550px;width:89px;height:22px;color:#c41a2a;font-size:19px;font-weight:normal;line-height:23px;letter-spacing:0.3px">219.9 W</div>
<div class="t" style="left:420px;top:532px;font-size:11px;color:#222;letter-spacing:0.55px">Autorefresh</div>
<div class="a" style="left:418px;top:551px;width:100px;height:17px;background:#fff;border-top:2px solid #7c7c74;border-left:2px solid #7c7c74;border-right:1px solid #c0c0b8;border-bottom:1px solid #e0e0d8"></div>
<div class="t" style="left:421px;top:556px;font-size:10px;color:#111;">1S</div>
<div class="a" style="left:501px;top:553px;width:15px;height:14px;background:#f8f8f2;border-right:1px solid #555;border-bottom:1px solid #555;font-size:8px;text-align:center;line-height:13px;color:#000">&#9660;</div>
<div class="t" style="left:545px;top:532px;font-size:11px;color:#222;letter-spacing:0.45px">Output_mode</div>
<div class="a" style="left:543px;top:551px;width:103px;height:17px;background:#f4f3ee;border-top:2px solid #a8a8a0;border-left:2px solid #a8a8a0;border-right:1px solid #d0d0c8;border-bottom:1px solid #e0e0d8"></div>
<div class="t" style="left:546px;top:556px;font-size:10px;color:#c4c4bc;">SAS mode</div>
<div class="a" style="left:629px;top:553px;width:15px;height:14px;background:#f4f3ee;border-right:1px solid #aaa;border-bottom:1px solid #aaa;font-size:8px;text-align:center;line-height:13px;color:#aaa">&#9660;</div>
<div class="a" style="left:664px;top:540px;width:21px;height:21px;border-radius:50%;background:#08f408"></div>
<div class="a" style="left:696px;top:536px;width:81px;height:32px;background:#ece9d8;border-top:1px solid #fbfaf6;border-left:1px solid #fbfaf6;border-right:2px solid #8c8c84;border-bottom:2px solid #8c8c84;text-align:center;font-weight:bold;font-size:18px;line-height:31px;letter-spacing:0.5px;color:#a4a49c;-webkit-text-stroke:0.6px #a4a49c">ON</div>
<div class="a" style="left:780px;top:536px;width:80px;height:32px;background:#ece9d8;border-top:1px solid #fbfaf6;border-left:1px solid #fbfaf6;border-right:2px solid #8c8c84;border-bottom:2px solid #8c8c84;text-align:center;font-weight:bold;font-size:18px;line-height:31px;letter-spacing:0.5px;color:#000;-webkit-text-stroke:1px #000">OFF</div>
<div class="a" style="left:0;top:612px;width:1096px;height:1px;background:#c4c2b4"></div>
<div class="a" style="left:0;top:613px;width:1096px;height:1px;background:#fbfaf4"></div>
<div class="a" style="left:0px;top:614px;width:113px;height:16px;border-right:1px solid #c8c6b8;border-left:1px solid #fff"></div>
<div class="t" style="left:3px;top:617px;font-size:11px;letter-spacing:0px;color:#222">PRODUCT:PVS1000</div>
<div class="a" style="left:116px;top:614px;width:93px;height:16px;border-right:1px solid #c8c6b8;border-left:1px solid #fff"></div>
<div class="t" style="left:118px;top:617px;font-size:11px;letter-spacing:0.3px;color:#222">VERSION:01.03</div>
<div class="a" style="left:213px;top:614px;width:78px;height:16px;border-right:1px solid #c8c6b8;border-left:1px solid #fff"></div>
<div class="t" style="left:217px;top:617px;font-size:11px;letter-spacing:0.15px;color:#222">Mode:SAS</div>
<div class="a" style="left:295px;top:614px;width:75px;height:16px;border-right:1px solid #c8c6b8;border-left:1px solid #fff"></div>
<div class="t" style="left:301px;top:617px;font-size:11px;letter-spacing:0px;color:#222">OUTPUT:ON</div>
<div class="a" style="left:373px;top:614px;width:80px;height:16px;border-right:1px solid #c8c6b8;border-left:1px solid #fff"></div>
<div class="t" style="left:377px;top:617px;font-size:11px;letter-spacing:0px;color:#222">ERROR:0</div>
<div class="a" style="left:456px;top:614px;width:166px;height:16px;border-right:1px solid #c8c6b8;border-left:1px solid #fff"></div>
<div class="t" style="left:460px;top:617px;font-size:11px;letter-spacing:0.72px;color:#222">Total time 00d:00h:08m:28S</div>
<div class="a" style="left:626px;top:614px;width:574px;height:16px;border-right:1px solid #c8c6b8;border-left:1px solid #fff"></div>
<div class="t" style="left:630px;top:617px;font-size:11px;letter-spacing:0.56px;color:#222">10:32:35 Running sas [Sucessful]</div>
<div class="a" style="left:0;top:629px;width:1096px;height:2px;background:#e8f0f8"></div>
<div class="a" style="left:1093px;top:19px;width:1px;height:612px;background:#fbfbf2"></div>
</body></html>
